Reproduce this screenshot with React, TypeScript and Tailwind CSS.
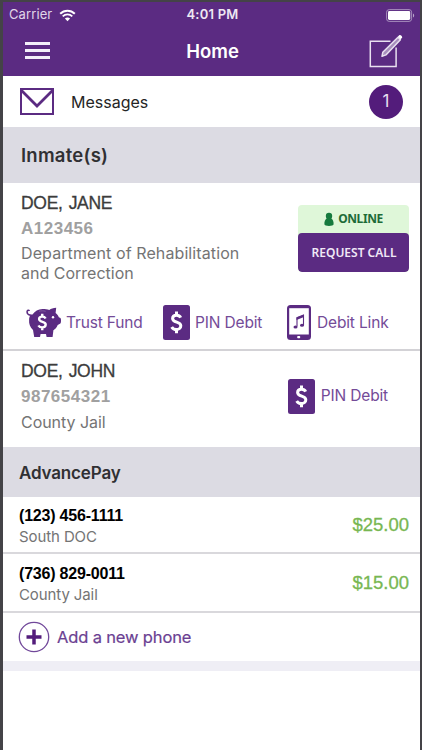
import { type FC, type ReactNode } from "react";

const WifiIcon: FC = () => (
	<svg className="w-[17px] h-[13px]" viewBox="0 0 17 13" fill="none" stroke="#fff">
		<path d="M1.2 4.8C5.2.7 11.8.7 15.8 4.8" strokeWidth="2" />
		<path d="M3.7 7.4c2.7-2.6 6.9-2.6 9.6 0" strokeWidth="1.8" />
		<path d="M8.5 12.2 5.9 9.6c1.5-1.4 3.7-1.4 5.2 0z" fill="#fff" stroke="none" />
	</svg>
);

const BatteryIcon: FC = () => (
	<svg className="w-[29px] h-[13px]" viewBox="0 0 29 13">
		<rect x="0.6" y="0.6" width="25" height="11.8" rx="2.6" fill="none" stroke="#a78fbc" />
		<rect x="2" y="2" width="22.2" height="9" rx="1.4" fill="#fff" />
		<path d="M27 4.5v4c1.6-.6 1.6-3.4 0-4z" fill="#b7a3c9" />
	</svg>
);

const ComposeIcon: FC = () => (
	<svg className="w-[34px] h-[34px]" viewBox="0 0 34 34" fill="none" stroke="#e9e1f0" strokeWidth="1.5">
		<path d="M21.5 7.3H1.3v25.2h25.8V13.5" />
		<path
			d="M13 22.3l.8-4L29 3.3l2.4 2.4L16.9 20.9z"
			fill="#a78fbc"
			strokeWidth="1.5"
			strokeLinejoin="round"
		/>
		<path d="M28.9 2.6 30.2 1.3c1.2-1.2 3.9 1.4 2.7 2.7l-1.3 1.3z" fill="#fff" stroke="none" />
	</svg>
);

const EnvelopeIcon: FC = () => (
	<svg className="w-[34px] h-[27px]" viewBox="0 0 34 27" fill="none" stroke="#5b2b82" strokeWidth="2">
		<rect x="1" y="1" width="32" height="25" />
		<path d="M1.5 2.5 17 18 32.5 2.5" strokeWidth="2.8" />
	</svg>
);

const PersonIcon: FC = () => (
	<svg className="w-[10px] h-[15px]" viewBox="0 0 10 15" fill="#167a3e">
		<circle cx="5" cy="3.9" r="3.2" />
		<path d="M3.1 6h3.8C9 7.6 9.8 9.6 9.6 12.3c0 2.3-9.2 2.3-9.2 0C.2 9.6 1 7.6 3.1 6z" />
	</svg>
);

const DollarPath: FC = () => (
	<path
		d="M18 12c-.8-1.6-2.3-2.4-4.2-2.4-2.3 0-3.9 1.3-3.9 3.2 0 4.6 8.2 2.9 8.2 7.3 0 2.3-1.8 3.8-4.3 3.8-2.1 0-3.8-.9-4.8-2.6M13.8 5.800v3.8M13.8 23.5v4.2"
		fill="none"
		stroke="#fff"
		strokeWidth="3"
	/>
);

const PiggyIcon: FC = () => (
	<svg className="w-[36px] h-[31px]" viewBox="0 0 36 31">
		<path
			d="M4.5 8.2C2 7.8.9 6.3 1.1 4.500 1.400 3 2.800 2.800 3.400 4"
			fill="none"
			stroke="#5b2b82"
			strokeWidth="1.5"
		/>
		<path
			d="M3.500 7.500h3C9 4 12 2.200 16.500 2c2.800 0 4.700.3 6.800.9C25 1.600 27.200 1 30.200.8l-.6 5.200c1.700 1.300 2.600 2.700 3.200 4.200l1.700.8c.8 1.300.7 4.400-.1 5.600l-2.700 1.300c-1 2.500-2.500 4.100-4.300 5.300l-.8 6.800h-6l-.6-3h-5.400l-.6 3H8.200L7 23c-3-2.900-4.200-6.300-3.900-10.300 0-2 .6-3.200 1.100-4.200z"
			fill="#5b2b82"
		/>
		<path d="M13 4.300c2.200-.6 4.400-.6 6.600 0" fill="none" stroke="#8f6dab" strokeWidth="0.700" />
		<circle cx="27" cy="10.3" r="1.2" fill="#fff" />
		<g transform="translate(5.200 2.500) scale(.8 .75)">
			<DollarPath />
		</g>
	</svg>
);

const PinIcon: FC = () => (
	<svg className="w-[27px] h-[35px]" viewBox="0 0 27 35">
		<rect width="27" height="35" rx="2.5" fill="#5b2b82" />
		<g transform="translate(-.3 .6)">
			<DollarPath />
		</g>
	</svg>
);

const MusicDeviceIcon: FC = () => (
	<svg className="w-[24px] h-[35px]" viewBox="0 0 24 35">
		<rect width="24" height="35" rx="3.5" fill="#5b2b82" />
		<rect x="2.2" y="3.2" width="19.6" height="26.3" fill="#fff" />
		<rect x="10.2" y="31" width="3" height="2.3" rx="0.8" fill="#fff" />
		<path d="M10 21.5v-8.5l6.5-2.5v9.7" fill="none" stroke="#5b2b82" strokeWidth="1.1" />
		<path d="M9.5 12.3l7.5-3v2.6l-7.5 3z" fill="#5b2b82" />
		<ellipse cx="8.5" cy="22" rx="2" ry="1.5" fill="#5b2b82" />
		<ellipse cx="15" cy="20.3" rx="2" ry="1.5" fill="#5b2b82" />
	</svg>
);

interface ActionProps {
	icon: ReactNode;
	label: string;
	className?: string;
}

const Action: FC<ActionProps> = ({ icon, label, className }) => (
	<div className={`flex items-center whitespace-nowrap text-[15.5px] tracking-[-0.15px] text-[#744b98] ${className}`}>
		{icon}
		<span>{label}</span>
	</div>
);

interface PhoneRowProps {
	phone: string;
	place: string;
	balance: string;
	className?: string;
}

const PhoneRow: FC<PhoneRowProps> = ({ phone, place, balance, className }) => (
	<div className={`flex items-center justify-between border-b-2 border-[#d9d8dc] pl-4 pr-[11px] ${className}`}>
		<div className="pt-px">
			<div className="font-['Liberation_Sans'] text-[16px] leading-[21px] font-bold tracking-[-0.2px] text-black">
				{phone}
			</div>
			<div className="text-[15px] leading-[21px] tracking-[-0.1px] text-[#747474]">{place}</div>
		</div>
		<div className="font-['Liberation_Sans'] text-[18.5px] text-[#78b752] [-webkit-text-stroke:0.3px]">
			{balance}
		</div>
	</div>
);

export default function App() {
	return (
		<div className="h-[750px] w-[422px] overflow-hidden border-t-2 border-r-2 border-l-3 border-[#444347] bg-white font-['Inter',sans-serif]">
			<header className="h-[74px] bg-[#5b2b82] text-white">
				<div className="grid h-[26px] grid-cols-3 items-center pl-[6px] pr-[5px] text-[13px]">
					<div className="flex items-center gap-[7px] text-[#e0d6e8]">
						<span className="tracking-[0.1px]">Carrier</span>
						<WifiIcon />
					</div>
					<div className="pl-px text-center font-semibold tracking-[0.2px] text-[#eee8f3]">4:01 PM</div>
					<div className="flex justify-end">
						<BatteryIcon />
					</div>
				</div>
				<div className="grid h-[46px] grid-cols-3 items-center pl-[22px] pr-[17px]">
					<div className="flex w-[25px] flex-col gap-1 pb-px">
						<div className="h-[3px] bg-[#f4effa]" />
						<div className="h-[3px] bg-[#f4effa]" />
						<div className="h-[3px] bg-[#f4effa]" />
					</div>
					<h1 className="pt-[2px] pr-[3px] text-center text-[18.5px] font-semibold">Home</h1>
					<div className="flex justify-end">
						<ComposeIcon />
					</div>
				</div>
			</header>

			<div className="flex h-[51px] items-center pl-[17px] pr-[17px]">
				<EnvelopeIcon />
				<span className="ml-[17px] text-[16px] text-[#252525]">Messages</span>
				<div className="ml-auto flex size-[34px] items-center justify-center rounded-full bg-[#531c7b] text-[17px] text-[#e8dff0]">
					1
				</div>
			</div>

			<h2 className="flex h-[56px] items-center bg-[#dcdbe3] pt-px pl-[18px] text-[18.5px] font-semibold tracking-[0.25px] text-[#303033]">
				Inmate(s)
			</h2>

			<section className="h-[168px] border-b-2 border-[#d3d2d6] pt-[7px]">
				<div className="flex h-[103px] justify-between pl-[18px] pr-[11px]">
					<div>
						<div className="font-['Liberation_Sans'] text-[17.5px] leading-[26px] tracking-[-0.3px] word-spacing-[1px] text-[#3c3c3c] [word-spacing:1.5px] [-webkit-text-stroke:0.3px]">
							DOE, JANE
						</div>
						<div className="font-['Liberation_Sans'] text-[17px] leading-[26px] font-bold tracking-[0.5px] text-[#a0a0a0]">
							A123456
						</div>
						<div className="w-[230px] pt-px text-[16px] leading-5 tracking-[0.1px] text-[#747474]">
							Department of Rehabilitation <span className="tracking-[0px]">and Correction</span>
						</div>
					</div>
					<div className="mt-[15px] h-[67px] w-[111px] overflow-hidden rounded-[4px] bg-[#dff7d9] font-['Noto_Sans']">
						<div className="flex h-7 items-center justify-center gap-[4px] text-[12px] font-bold tracking-[-0.4px] text-[#1d6b38]">
							<PersonIcon />
							ONLINE
						</div>
						<div className="flex h-[39px] items-center justify-center rounded-[4px] bg-[#5b2b82] pl-px text-[12px] font-semibold text-[#f0e8f6]">
							REQUEST CALL
						</div>
					</div>
				</div>
				<div className="flex pt-[12px] pl-[23px]">
					<Action icon={<PiggyIcon />} label="Trust Fund" className="w-[137px] gap-[4px]" />
					<Action icon={<PinIcon />} label="PIN Debit" className="w-[124px] gap-[5px]" />
					<Action icon={<MusicDeviceIcon />} label="Debit Link" className="gap-[6px]" />
				</div>
			</section>

			<section className="flex h-[96px] justify-between pl-[18px] pr-8">
				<div className="pt-[7px]">
					<div className="font-['Liberation_Sans'] text-[17.5px] leading-[26px] tracking-[-0.3px] text-[#3c3c3c] [word-spacing:1.5px] [-webkit-text-stroke:0.3px]">
						DOE, JOHN
					</div>
					<div className="font-['Liberation_Sans'] text-[17px] leading-[26px] font-bold tracking-[0.5px] text-[#a0a0a0]">
						987654321
					</div>
					<div className="text-[16px] leading-[24px] tracking-[-0.05px] text-[#747474]">County Jail</div>
				</div>
				<Action icon={<PinIcon />} label="PIN Debit" className="gap-[6px] self-center pb-[6px]" />
			</section>

			<h2 className="flex h-[50px] items-center bg-[#dcdbe3] pt-[3px] pl-4 text-[17px] font-semibold tracking-[-0.15px] text-[#303033]">
				AdvancePay
			</h2>

			<PhoneRow phone="(123) 456-1111" place="South DOC" balance="$25.00" className="h-[57px] pt-px" />
			<PhoneRow phone="(736) 829-0011" place="County Jail" balance="$15.00" className="h-[59px] pt-px" />

			<div className="flex h-12 items-center gap-[7px] pl-[15px]">
				<svg className="w-[32px] h-[32px]" viewBox="0 0 32 32" fill="none">
					<circle cx="16" cy="16" r="14.7" stroke="#71489a" strokeWidth="1.3" />
					<path d="M16 8.5v15M8.5 16h15" stroke="#531c7b" strokeWidth="3.5" />
				</svg>
				<span className="text-[16.5px] tracking-[-0.15px] text-[#6b3f92] [-webkit-text-stroke:0.2px]">
					Add a new phone
				</span>
			</div>
			<div className="h-[10px] bg-[#efeef5]" />
		</div>
	);
}
